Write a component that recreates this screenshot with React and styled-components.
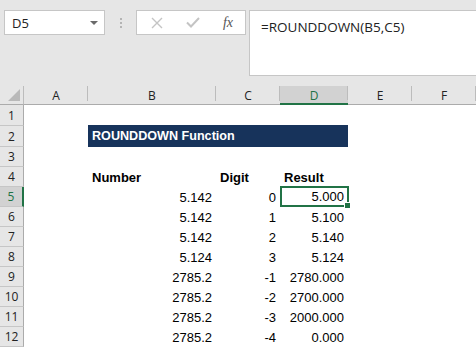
import React from 'react';
import styled, { createGlobalStyle } from 'styled-components';

const GlobalStyle = createGlobalStyle`
  html, body {
    margin: 0;
    padding: 0;
    background: #ffffff;
  }
  body {
    width: 476px;
    height: 347px;
    overflow: hidden;
  }
`;

const Window = styled.div`
  width: 476px;
  height: 347px;
  overflow: hidden;
  background: #ffffff;
  font-family: "Liberation Sans", Arial, sans-serif;
`;

const Toolbar = styled.div`
  height: 86px;
  background: #e6e6e6;
  display: flex;
  align-items: flex-start;
  padding: 10px 0 0 4px;
  box-sizing: border-box;
`;

const NameBox = styled.div`
  width: 101px;
  height: 25px;
  box-sizing: border-box;
  background: #ffffff;
  border: 1px solid #c6c6c6;
  display: flex;
  align-items: center;
  justify-content: space-between;
  padding: 0 6px 0 7px;
  font-family: "Open Sans", "Noto Sans", sans-serif;
  font-size: 13px;
  color: #222222;
`;

const Caret = styled.span`
  width: 0;
  height: 0;
  border-left: 4px solid transparent;
  border-right: 4px solid transparent;
  border-top: 4px solid #6a6a6a;
`;

const Grip = styled.div`
  width: 31px;
  height: 25px;
  display: flex;
  flex-direction: column;
  align-items: center;
  justify-content: center;
  gap: 2px;

  span {
    width: 2px;
    height: 2px;
    background: #b4b4b4;
  }
`;

const FxButtons = styled.div`
  width: 110px;
  height: 25px;
  box-sizing: border-box;
  background: #ffffff;
  border: 1px solid #c6c6c6;
  display: flex;
  align-items: center;
  justify-content: space-between;
  padding: 0 12px 0 14px;
`;

const FxLabel = styled.span`
  font-family: "Liberation Serif", "DejaVu Serif", serif;
  font-style: italic;
  font-size: 14px;
  color: #555555;
`;

const FormulaBar = styled.div`
  margin-left: 3px;
  flex: 1;
  height: 66px;
  box-sizing: border-box;
  background: #ffffff;
  border: 1px solid #c6c6c6;
  border-right: none;
  padding: 7px 0 0 11px;
  font-family: "Open Sans", "Noto Sans", sans-serif;
  font-size: 13.5px;
  color: #222222;
`;

const Sheet = styled.div`
  display: grid;
  grid-template-columns: 24px 64px 128px 64px 68px 64px 64px;
  grid-template-rows: 19px 21px 21px repeat(10, 20px);
`;

const ColHead = styled.div`
  background: ${(p) => (p.$active ? '#d2d2d2' : '#e6e6e6')};
  border-bottom: ${(p) => (p.$active ? '2px solid #217346' : '1px solid #ababab')};
  box-sizing: border-box;
  position: relative;
  display: flex;
  align-items: center;
  justify-content: center;
  font-family: "Open Sans", "Noto Sans", sans-serif;
  font-size: 12px;
  color: ${(p) => (p.$active ? '#217346' : '#222222')};
  padding-top: 1px;

  &::after {
    content: '';
    position: absolute;
    right: 0;
    top: 0;
    bottom: 3px;
    width: 1px;
    background: #bcbcbc;
  }
`;

const Corner = styled.div`
  background: #e6e6e6;
  border-bottom: 1px solid #ababab;
  border-right: 1px solid #bcbcbc;
  box-sizing: border-box;
  display: flex;
  align-items: flex-end;
  justify-content: flex-end;
  padding: 0 3px 3px 0;
`;

const CornerMark = styled.span`
  width: 0;
  height: 0;
  border-left: 12px solid transparent;
  border-bottom: 12px solid #b9b9b9;
`;

const RowHead = styled.div`
  background: ${(p) => (p.$active ? '#d2d2d2' : '#e6e6e6')};
  border-right: ${(p) => (p.$active ? '2px solid #217346' : '1px solid #ababab')};
  border-bottom: 1px solid #c6c6c6;
  box-sizing: border-box;
  display: flex;
  align-items: center;
  justify-content: center;
  font-family: "Open Sans", "Noto Sans", sans-serif;
  font-size: 12px;
  color: ${(p) => (p.$active ? '#217346' : '#222222')};
`;

const Cell = styled.div`
  box-sizing: border-box;
  display: flex;
  align-items: center;
  justify-content: ${(p) => (p.$align === 'right' ? 'flex-end' : 'flex-start')};
  padding: 0 4px;
  font-size: 13px;
  font-weight: ${(p) => (p.$bold ? 700 : 400)};
  color: #000000;
  white-space: nowrap;
`;

const Title = styled(Cell)`
  grid-column: span 3;
  background: #17335b;
  color: #ffffff;
  font-size: 12.6px;
  margin-top: -1px;
`;

const Selected = styled(Cell)`
  position: relative;
  box-shadow: inset 0 0 0 2px #217346;
  margin: -1px -1px 0 0;
  padding-right: 5px;
`;

const FillHandle = styled.span`
  position: absolute;
  right: -2px;
  bottom: -2px;
  width: 5px;
  height: 5px;
  background: #217346;
  border: 1px solid #ffffff;
  box-sizing: content-box;
`;

const columns = ['A', 'B', 'C', 'D', 'E', 'F'];

const rows = [
  ['5.142', '0', '5.000'],
  ['5.142', '1', '5.100'],
  ['5.142', '2', '5.140'],
  ['5.124', '3', '5.124'],
  ['2785.2', '-1', '2780.000'],
  ['2785.2', '-2', '2700.000'],
  ['2785.2', '-3', '2000.000'],
  ['2785.2', '-4', '0.000'],
];

const CrossIcon = () => (
  <svg width="12" height="12" viewBox="0 0 12 12">
    <path d="M1 1 L11 11 M11 1 L1 11" stroke="#c4c4c4" strokeWidth="1.4" fill="none" />
  </svg>
);

const CheckIcon = () => (
  <svg width="14" height="11" viewBox="0 0 14 11">
    <path d="M1 5.5 L5 9.5 L13 1" stroke="#c4c4c4" strokeWidth="2" fill="none" />
  </svg>
);

const App = () => (
  <Window>
    <GlobalStyle />
    <Toolbar>
      <NameBox>
        D5
        <Caret />
      </NameBox>
      <Grip>
        <span />
        <span />
        <span />
      </Grip>
      <FxButtons>
        <CrossIcon />
        <CheckIcon />
        <FxLabel>fx</FxLabel>
      </FxButtons>
      <FormulaBar>=ROUNDDOWN(B5,C5)</FormulaBar>
    </Toolbar>

    <Sheet>
      <Corner>
        <CornerMark />
      </Corner>
      {columns.map((c) => (
        <ColHead key={c} $active={c === 'D'}>{c}</ColHead>
      ))}

      <RowHead>1</RowHead>
      {columns.map((c) => <Cell key={`1${c}`} />)}

      <RowHead>2</RowHead>
      <Cell />
      <Title $bold>ROUNDDOWN Function</Title>
      <Cell />
      <Cell />

      <RowHead>3</RowHead>
      {columns.map((c) => <Cell key={`3${c}`} />)}

      <RowHead>4</RowHead>
      <Cell />
      <Cell $bold>Number</Cell>
      <Cell $bold>Digit</Cell>
      <Cell $bold>Result</Cell>
      <Cell />
      <Cell />

      {rows.map(([num, digit, result], i) => {
        const n = i + 5;
        return (
          <React.Fragment key={n}>
            <RowHead $active={n === 5}>{n}</RowHead>
            <Cell />
            <Cell $align="right">{num}</Cell>
            <Cell $align="right">{digit}</Cell>
            {n === 5 ? (
              <Selected $align="right">
                {result}
                <FillHandle />
              </Selected>
            ) : (
              <Cell $align="right">{result}</Cell>
            )}
            <Cell />
            <Cell />
          </React.Fragment>
        );
      })}
    </Sheet>
  </Window>
);

export default App;
